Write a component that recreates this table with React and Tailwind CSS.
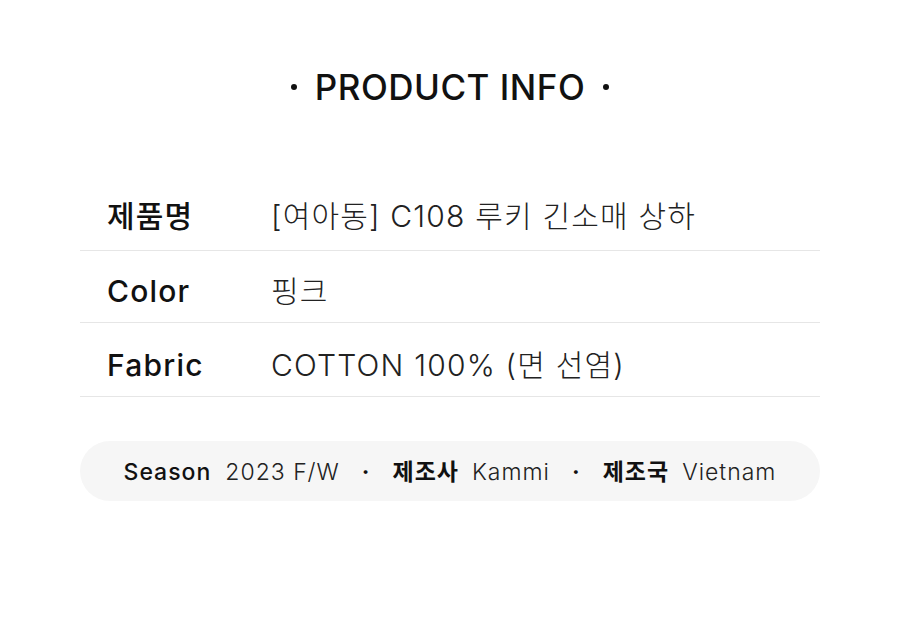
import React from "react";

const rows = [
  { label: "제품명", value: "[여아동] C108 루키 긴소매 상하", cls: "h-[71px] pt-[2px]" },
  { label: "Color", value: "핑크", cls: "h-[72px] pt-[10px]" },
  { label: "Fabric", value: "COTTON 100% (면 선염)", cls: "h-[74px] pt-[12px]" },
];

const font = { fontFamily: '"Inter", "Noto Sans CJK KR", sans-serif' };

function App() {
  return (
    <div className="w-[900px] h-[626px] bg-white text-[#111]" style={font}>
      <div className="pt-[66px] flex justify-center items-center">
        <span className="w-[6px] h-[6px] rounded-full bg-[#111]" />
        <h1 className="mx-[18px] text-[35px] font-medium leading-[42px] tracking-[0.5px]">PRODUCT INFO</h1>
        <span className="w-[6px] h-[6px] rounded-full bg-[#111]" />
      </div>

      <div className="mx-[80px] mt-[72px]">
        {rows.map((row) => (
          <div key={row.label} className={"flex items-center border-b border-[#e6e6e6] " + row.cls}>
            <div className="w-[191px] pl-[27px] text-[30px] font-medium tracking-[1.2px]">{row.label}</div>
            <div className="text-[30px] font-light tracking-[1.2px] text-[#222]">{row.value}</div>
          </div>
        ))}
      </div>

      <div className="mx-[80px] mt-[44px] h-[60px] rounded-full bg-[#f6f6f6] flex items-center justify-center text-[23px] tracking-[1px] pt-[2px]">
        <span className="font-medium">Season</span>
        <span className="ml-[14px] font-light text-[#222]">2023 F/W</span>
        <span className="mx-[22px] font-bold">·</span>
        <span className="font-bold">제조사</span>
        <span className="ml-[13px] font-light text-[#222]">Kammi</span>
        <span className="mx-[22px] font-bold">·</span>
        <span className="font-bold">제조국</span>
        <span className="ml-[13px] font-light text-[#222]">Vietnam</span>
      </div>
    </div>
  );
}

export default App;
